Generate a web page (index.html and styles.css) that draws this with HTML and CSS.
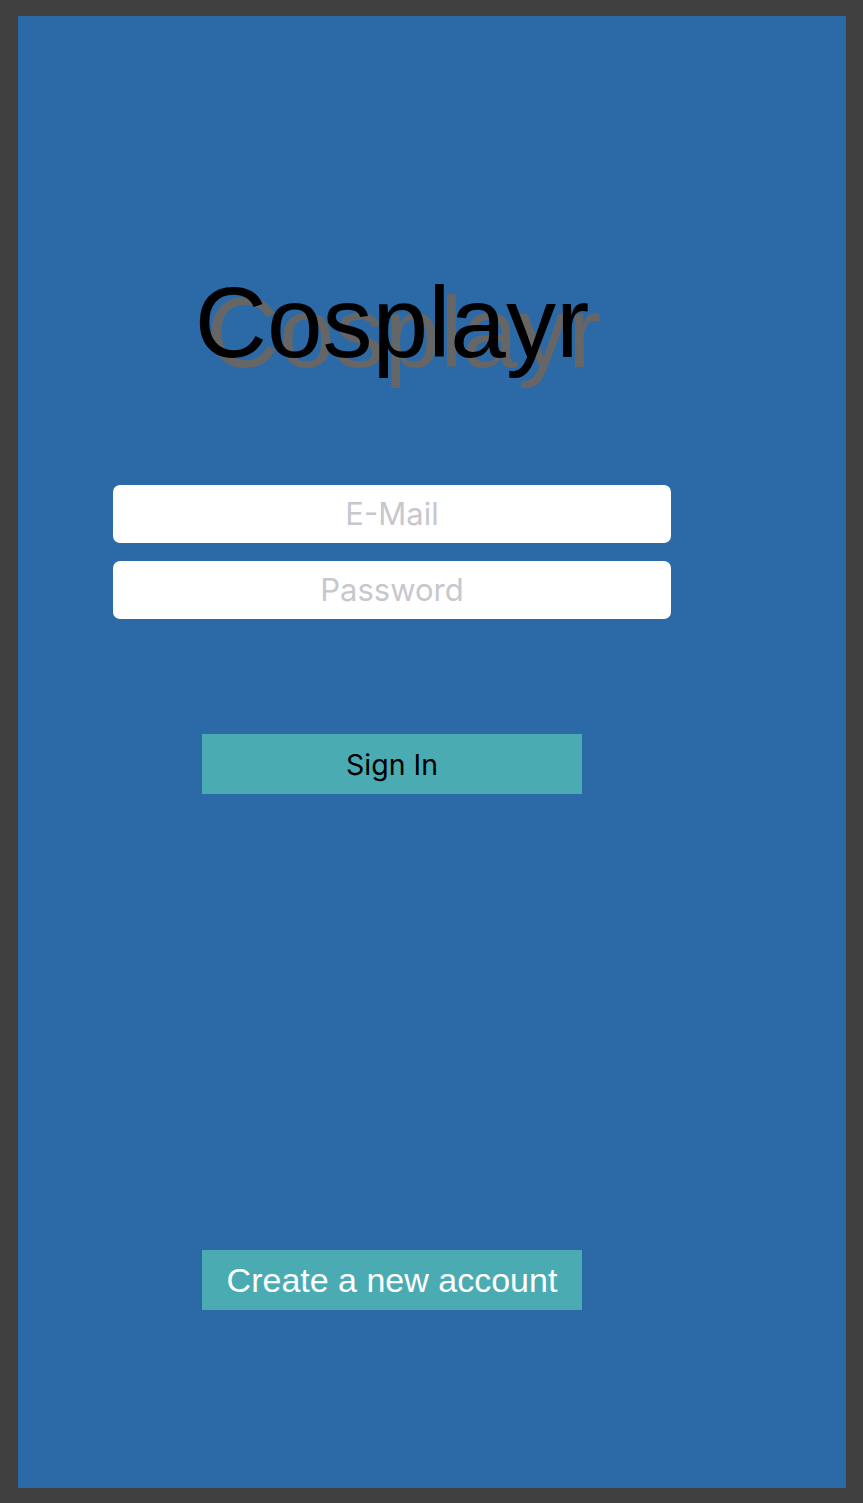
FILE: index.html
```html
<!DOCTYPE html>
<html>
<head>
<meta charset="utf-8">
<link rel="stylesheet" href="styles.css">
</head>
<body>
<main class="panel">
  <h1 class="title">Cosplayr</h1>
  <form class="form">
    <div class="field"><span class="placeholder">E-Mail</span></div>
    <div class="field"><span class="placeholder">Password</span></div>
  </form>
  <div class="btn btn-signin">Sign In</div>
  <div class="btn btn-create">Create a new account</div>
</main>
</body>
</html>
```
FILE: styles.css
```css
html, body {
  margin: 0;
  padding: 0;
}
body {
  background: #404040;
  padding: 16px 17px 15px 18px;
  width: 863px;
  height: 1503px;
  box-sizing: border-box;
}
.panel {
  width: 828px;
  height: 1472px;
  background: #2b6aa6;
  box-sizing: border-box;
  padding: 0 80px 0 0;
  display: flex;
  flex-direction: column;
  align-items: center;
}
.title {
  margin: 256px 0 0 0;
  font-family: "Liberation Sans", Arial, sans-serif;
  font-weight: normal;
  font-size: 100px;
  line-height: 100px;
  color: #000;
  text-shadow: 12px 10px 0 #666666;
}
.form {
  margin: 113px 0 0 0;
  display: flex;
  flex-direction: column;
  gap: 18px;
}
.field {
  width: 558px;
  height: 58px;
  background: #fff;
  border-radius: 7px;
  display: flex;
  align-items: center;
  justify-content: center;
}
.placeholder {
  font-family: "Inter", "Roboto", sans-serif;
  font-size: 31px;
  line-height: 1;
  color: #c7c7cd;
  margin-top: -2px;
}
.btn {
  width: 380px;
  height: 60px;
  background: #4aabb3;
  display: flex;
  align-items: center;
  justify-content: center;
}
.btn-signin {
  margin-top: 115px;
  font-family: "Inter", "Roboto", sans-serif;
  font-size: 28.5px;
  color: #000;
}
.btn-create {
  margin-top: 456px;
  font-family: "Liberation Sans", Arial, sans-serif;
  font-size: 34px;
  color: #fff;
}
```
